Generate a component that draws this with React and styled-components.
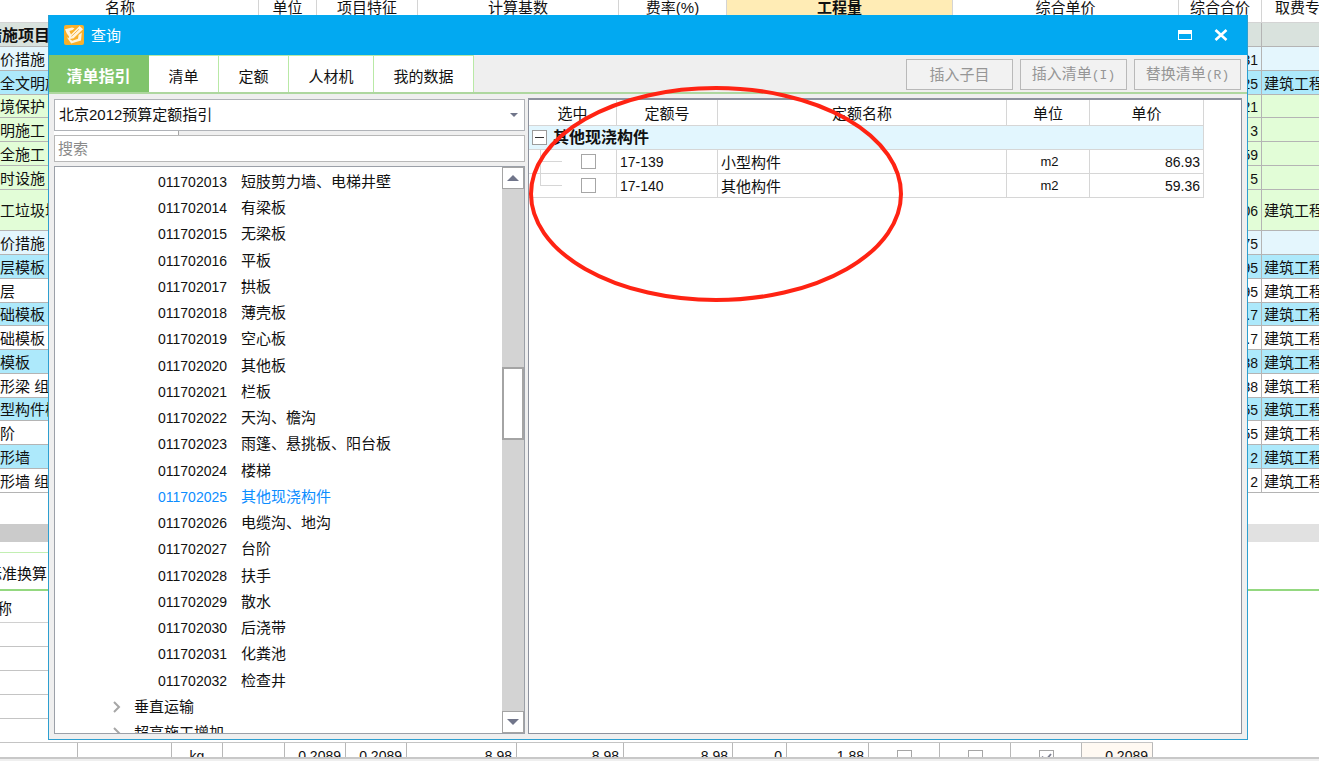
import styled, { createGlobalStyle } from 'styled-components';

const GlobalStyle = createGlobalStyle`
  * {
    box-sizing: border-box;
  }
  body {
    margin: 0;
    overflow: hidden;
    background: #fff;
    color: #111;
    font-family: 'Liberation Sans', 'Noto Sans CJK SC', sans-serif;
    font-size: 15px;
    line-height: 20px;
  }
  button,
  input,
  select {
    margin: 0;
    padding: 0;
    border-radius: 0;
    color: inherit;
    font: inherit;
  }
  table {
    border-collapse: separate;
    border-spacing: 0;
    table-layout: fixed;
  }
  th,
  td {
    padding: 0;
    overflow: hidden;
    font-weight: 400;
    white-space: nowrap;
  }
`;

const budgetRows = [
  { name: '措施项目', total: '', major: '', tone: 'total' },
  { name: '价措施', total: '31', major: '', tone: 'pale' },
  { name: '全文明施工', total: '25', major: '建筑工程', tone: 'blue' },
  { name: '境保护', total: '21', major: '', tone: 'green' },
  { name: '明施工', total: '3', major: '', tone: 'green' },
  { name: '全施工', total: '59', major: '', tone: 'green' },
  { name: '时设施', total: '5', major: '', tone: 'green' },
  { name: '工垃圾增加', total: '06', major: '建筑工程', tone: 'green', tall: true },
  { name: '价措施', total: '75', major: '', tone: 'pale' },
  { name: '层模板', total: '95', major: '建筑工程', tone: 'blue' },
  { name: '层', total: '95', major: '建筑工程' },
  { name: '础模板', total: '.7', major: '建筑工程', tone: 'blue' },
  { name: '础模板', total: '.7', major: '建筑工程' },
  { name: '模板', total: '38', major: '建筑工程', tone: 'blue' },
  { name: '形梁 组合', total: '38', major: '建筑工程' },
  { name: '型构件模板', total: '55', major: '建筑工程', tone: 'blue' },
  { name: '阶', total: '55', major: '建筑工程' },
  { name: '形墙', total: '2', major: '建筑工程', tone: 'blue' },
  { name: '形墙 组合', total: '2', major: '建筑工程' },
];

const treeItems = [
  ['011702013', '短肢剪力墙、电梯井壁'],
  ['011702014', '有梁板'],
  ['011702015', '无梁板'],
  ['011702016', '平板'],
  ['011702017', '拱板'],
  ['011702018', '薄壳板'],
  ['011702019', '空心板'],
  ['011702020', '其他板'],
  ['011702021', '栏板'],
  ['011702022', '天沟、檐沟'],
  ['011702023', '雨篷、悬挑板、阳台板'],
  ['011702024', '楼梯'],
  ['011702025', '其他现浇构件'],
  ['011702026', '电缆沟、地沟'],
  ['011702027', '台阶'],
  ['011702028', '扶手'],
  ['011702029', '散水'],
  ['011702030', '后浇带'],
  ['011702031', '化粪池'],
  ['011702032', '检查井'],
];

const quotas = [
  { code: '17-139', name: '小型构件', unit: 'm2', price: '86.93' },
  { code: '17-140', name: '其他构件', unit: 'm2', price: '59.36' },
];

const tones = {
  total: '#d9e2dd',
  pale: '#e4f6fd',
  blue: '#ade9fb',
  green: '#e2fdd7',
};

function BudgetTable() {
  return (
    <StyledBudgetTable>
      <colgroup>
        <col width="259" />
        <col width="58" />
        <col width="101" />
        <col width="201" />
        <col width="108" />
        <col width="226" />
        <col width="226" />
        <col width="83" />
        <col />
      </colgroup>
      <thead>
        <tr>
          <th className="name">名称</th>
          <th>单位</th>
          <th>项目特征</th>
          <th>计算基数</th>
          <th>费率(%)</th>
          <th className="quantity">工程量</th>
          <th>综合单价</th>
          <th>综合合价</th>
          <th className="major">取费专业</th>
        </tr>
      </thead>
      <tbody>
        {budgetRows.map((row, i) => (
          <BudgetRow key={i} $tone={row.tone} $tall={row.tall}>
            <td className="name">{row.name}</td>
            <td />
            <td />
            <td />
            <td />
            <td />
            <td />
            <td className="number">{row.total}</td>
            <td className="text">{row.major}</td>
          </BudgetRow>
        ))}
      </tbody>
    </StyledBudgetTable>
  );
}

function ResourceTable() {
  return (
    <StyledResourceTable>
      <colgroup>
        <col width="78" />
        <col width="94" />
        <col width="51" />
        <col width="62" />
        <col width="61" />
        <col width="61" />
        <col width="110" />
        <col width="107" />
        <col width="109" />
        <col width="54" />
        <col width="82" />
        <col width="71" />
        <col width="71" />
        <col width="71" />
        <col width="71" />
      </colgroup>
      <thead>
        <tr>
          <th>称</th>
          <th colSpan="14" />
        </tr>
      </thead>
      <tbody>
        {[1, 2, 3, 4, 5].map((n) => (
          <tr key={n}>
            <td colSpan="15" />
          </tr>
        ))}
        <tr className="values">
          <td />
          <td />
          <td className="center">kg</td>
          <td />
          <td>0.2089</td>
          <td>0.2089</td>
          <td>8.98</td>
          <td>8.98</td>
          <td>8.98</td>
          <td>0</td>
          <td>1.88</td>
          <td className="center">
            <CheckBox aria-label="是否暂估" />
          </td>
          <td className="center">
            <CheckBox aria-label="锁定数量" />
          </td>
          <td className="center">
            <CheckBox aria-label="是否计价" defaultChecked />
          </td>
          <td className="original">0.2089</td>
        </tr>
      </tbody>
    </StyledResourceTable>
  );
}

function CheckBox(props) {
  return (
    <StyledCheckBox>
      <input type="checkbox" {...props} />
      <svg width="11" height="9" viewBox="0 0 11 9">
        <path d="M1 3.5 4.5 7.5 10 1" fill="none" stroke="#7b7d90" strokeWidth="1.8" />
      </svg>
    </StyledCheckBox>
  );
}

function TitleBar() {
  return (
    <StyledTitleBar>
      <svg width="20" height="20" viewBox="0 0 20 20">
        <rect width="20" height="20" rx="2" fill="#f9b02a" />
        <path
          d="M1 4.2 8 2.4l2.6.8-2 1.8L5.4 6 7 9.4 15.6 1 19 4.2 9.6 13.2 4.6 14.2 5 11.6 2.8 8.6Z"
          fill="#fff4dc"
        />
        <path d="m14.6 10 3.2-2.6-.8 8.2-9.8 2.8L3 12.6l1.2.2 4 3 5.8-2Z" fill="#fff4dc" />
        <path d="m7.4 11.4 7.6-7.2" stroke="#f6b94f" strokeWidth="1" />
      </svg>
      <h1>查询</h1>
      <button type="button" aria-label="最大化">
        <svg width="14" height="10" viewBox="0 0 14 10">
          <path d="M0 0h14v10H0zM1 4v5h12V4z" fill="#fff" fillRule="evenodd" />
        </svg>
      </button>
      <button type="button" aria-label="关闭">
        <svg width="14" height="12" viewBox="0 0 14 12">
          <path d="M1.5 1 12.5 11M12.5 1 1.5 11" stroke="#fff" strokeWidth="2.6" />
        </svg>
      </button>
    </StyledTitleBar>
  );
}

function Toolbar() {
  return (
    <StyledToolbar>
      <Tab type="button" $width={100} $active>
        清单指引
      </Tab>
      <Tab type="button" $width={70}>
        清单
      </Tab>
      <Tab type="button" $width={70}>
        定额
      </Tab>
      <Tab type="button" $width={85}>
        人材机
      </Tab>
      <Tab type="button" $width={100}>
        我的数据
      </Tab>
      <div className="actions">
        <ActionButton type="button">插入子目</ActionButton>
        <ActionButton type="button">
          插入清单<span>(I)</span>
        </ActionButton>
        <ActionButton type="button">
          替换清单<span>(R)</span>
        </ActionButton>
      </div>
    </StyledToolbar>
  );
}

function Arrow({ up }) {
  return (
    <svg width="12" height="6" viewBox="0 0 12 6">
      <path d={up ? 'M6 0 12 6H0Z' : 'M0 0h12L6 6Z'} fill="#70758a" />
    </svg>
  );
}

function Chevron() {
  return (
    <svg width="8" height="12" viewBox="0 0 8 12">
      <path d="m1 1 5 5-5 5" fill="none" stroke="#a6a6a6" strokeWidth="2" />
    </svg>
  );
}

function GuidePanel() {
  return (
    <StyledGuidePanel>
      <SelectBox>
        <select aria-label="定额指引">
          <option>北京2012预算定额指引</option>
        </select>
        <svg width="8" height="4" viewBox="0 0 8 4">
          <path d="M0 0h8L4 4Z" fill="#70758a" />
        </svg>
      </SelectBox>
      <Splitter />
      <SearchInput type="text" placeholder="搜索" aria-label="搜索" />
      <TreeBox>
        <ul>
          {treeItems.map(([code, name]) => (
            <TreeItem key={code} $selected={code === '011702025'}>
              <span>{code}</span>
              {name}
            </TreeItem>
          ))}
          <TreeFolder>
            <Chevron />
            垂直运输
          </TreeFolder>
          <TreeFolder>
            <Chevron />
            超高施工增加
          </TreeFolder>
        </ul>
        <ScrollBar>
          <button type="button" aria-label="向上滚动">
            <Arrow up />
          </button>
          <div className="thumb" />
          <button type="button" aria-label="向下滚动">
            <Arrow />
          </button>
        </ScrollBar>
      </TreeBox>
    </StyledGuidePanel>
  );
}

function QuotaPanel() {
  return (
    <StyledQuotaPanel>
      <QuotaTable>
        <colgroup>
          <col width="88" />
          <col width="101" />
          <col width="289" />
          <col width="83" />
          <col width="114" />
        </colgroup>
        <thead>
          <tr>
            <th>选中</th>
            <th>定额号</th>
            <th>定额名称</th>
            <th>单位</th>
            <th>单价</th>
          </tr>
        </thead>
        <tbody>
          <tr className="group">
            <td colSpan="5">
              <div>
                <button type="button" aria-label="折叠" />
                其他现浇构件
              </div>
            </td>
          </tr>
          {quotas.map((quota, i) => (
            <tr key={quota.code}>
              <td>
                <Branch $last={i === quotas.length - 1}>
                  <i />
                  <CheckBox aria-label={quota.name} />
                </Branch>
              </td>
              <td className="code">{quota.code}</td>
              <td className="title">{quota.name}</td>
              <td className="unit">{quota.unit}</td>
              <td className="price">{quota.price}</td>
            </tr>
          ))}
        </tbody>
      </QuotaTable>
    </StyledQuotaPanel>
  );
}

export default function App() {
  return (
    <Page>
      <GlobalStyle />
      <BudgetTable />
      <HorizontalScroll>
        <div />
      </HorizontalScroll>
      <DetailTabs>
        <button type="button">标准换算</button>
      </DetailTabs>
      <DetailArea>
        <ResourceTable />
      </DetailArea>
      <StatusBar />
      <Dialog role="dialog" aria-label="查询">
        <TitleBar />
        <Toolbar />
        <DialogBody>
          <GuidePanel />
          <QuotaPanel />
        </DialogBody>
        <Marker viewBox="0 0 376 218">
          <ellipse cx="188" cy="109" rx="185" ry="106" />
        </Marker>
      </Dialog>
    </Page>
  );
}

const Page = styled.div`
  position: relative;
  display: flex;
  flex-direction: column;
  height: 100vh;
  overflow: hidden;
`;

const StyledBudgetTable = styled.table`
  width: 100%;
  th {
    height: 23px;
    overflow: visible;
    border-right: 1px solid #d4d4d4;
    border-bottom: 1px solid #d4d4d4;
    line-height: 16px;
    vertical-align: top;
  }
  th.name {
    padding-right: 18px;
  }
  th.quantity {
    background: #ffecb5;
    font-weight: 700;
  }
  th.major {
    padding-left: 13px;
    border-right: 0;
    overflow: hidden;
    text-align: left;
  }
`;

const BudgetRow = styled.tr`
  height: ${({ $tall }) => ($tall ? 41 : 24)}px;
  background: ${({ $tone }) => tones[$tone] || '#fff'};
  &:nth-child(4n) {
    height: ${({ $tall }) => ($tall ? 41 : 23)}px;
  }
  td {
    padding-top: 2px;
    border-right: 1px solid #b4b4b4;
    border-bottom: 1px solid #b4b4b4;
  }
  td:last-child {
    border-right: 0;
  }
  .name {
    font-size: ${({ $tone }) => ($tone === 'total' ? 16 : 15)}px;
    font-weight: ${({ $tone }) => ($tone === 'total' ? 700 : 400)};
    text-indent: ${({ $tone }) => ($tone === 'total' ? -14 : 0)}px;
  }
  .number {
    padding-right: 3px;
    font-size: 14px;
    text-align: right;
  }
  .text {
    padding-left: 2px;
  }
`;

const HorizontalScroll = styled.div`
  flex: none;
  height: 18px;
  margin-top: 31px;
  background: #e1e1e1;
  div {
    width: 50%;
    height: 100%;
    background: #cbcbcb;
  }
`;

const DetailTabs = styled.div`
  flex: none;
  display: flex;
  height: 49px;
  padding-top: 10px;
  border-bottom: 2px solid #94d880;
  button {
    width: 140px;
    padding-top: 5px;
    border: 0;
    border-top: 1px solid #c2efb2;
    background: #fff;
    text-align: left;
    text-indent: -13px;
  }
`;

const DetailArea = styled.div`
  flex: 1;
  min-height: 0;
  overflow: hidden;
`;

const StyledResourceTable = styled.table`
  width: 1152px;
  th {
    height: 32px;
    padding-top: 4px;
    border-bottom: 1px solid #d0d0d0;
    text-align: left;
    text-indent: -3px;
  }
  td {
    height: 24px;
    padding-right: 4px;
    border-bottom: 1px solid #c4c4c4;
    font-size: 14px;
    text-align: right;
  }
  .values td {
    height: 27px;
    border-right: 1px solid #b8b8b8;
  }
  .values .center {
    padding: 0;
    text-align: center;
  }
  .values .original {
    background: #fff9f2;
  }
`;

const StatusBar = styled.div`
  flex: none;
  height: 4px;
  border-top: 2px solid #c8c8c8;
  background: #efefef;
`;

const StyledCheckBox = styled.label`
  display: inline-grid;
  place-items: center;
  vertical-align: middle;
  input,
  svg {
    grid-area: 1 / 1;
  }
  input {
    width: 15px;
    height: 15px;
    appearance: none;
    border: 1px solid #a6a6a6;
    background: #fff;
  }
  svg {
    visibility: hidden;
  }
  input:checked + svg {
    visibility: visible;
  }
`;

const Dialog = styled.section`
  position: absolute;
  top: 15px;
  right: 71px;
  bottom: 21px;
  left: 48px;
  display: flex;
  flex-direction: column;
  border: 1px solid #2d9fd0;
  border-top: 0;
  background: #efefef;
`;

const StyledTitleBar = styled.header`
  flex: none;
  display: flex;
  align-items: center;
  height: 40px;
  padding: 0 18px 0 15px;
  background: #02a9f1;
  color: #fff;
  h1 {
    flex: 1;
    margin: 0;
    padding: 2px 0 0 7px;
    font-size: 15px;
    font-weight: 400;
  }
  button {
    display: grid;
    place-items: center;
    width: 16px;
    height: 16px;
    margin-left: 20px;
    border: 0;
    background: none;
  }
`;

const StyledToolbar = styled.nav`
  flex: none;
  display: flex;
  height: 39px;
  border-bottom: 2px solid #aed79f;
  .actions {
    display: flex;
    gap: 7px;
    margin-left: auto;
    padding: 4px 6px 2px 0;
  }
`;

const Tab = styled.button`
  width: ${({ $width }) => $width}px;
  padding-top: 5px;
  border: 0;
  border-top: 1px solid ${({ $active }) => ($active ? '#80c46c' : '#b9e9a6')};
  border-right: 1px solid ${({ $active }) => ($active ? '#80c46c' : '#b9e9a6')};
  background: ${({ $active }) => ($active ? '#80c46c' : '#fff')};
  color: ${({ $active }) => ($active ? '#fff' : '#111')};
  font-size: ${({ $active }) => ($active ? 16 : 15)}px;
  font-weight: ${({ $active }) => ($active ? 700 : 400)};
`;

const ActionButton = styled.button`
  width: 107px;
  padding-top: 1px;
  border: 1px solid #b9b9b9;
  background: #f2f2f2;
  color: #969696;
  white-space: nowrap;
  span {
    font-family: 'Liberation Mono', monospace;
    font-size: 13px;
  }
`;

const DialogBody = styled.div`
  flex: 1;
  display: grid;
  grid-template-columns: 471px 1fr;
  gap: 3px;
  min-height: 0;
  padding: 4px 5px 5px;
`;

const StyledGuidePanel = styled.div`
  display: flex;
  flex-direction: column;
  min-height: 0;
  padding-top: 1px;
`;

const SelectBox = styled.div`
  flex: none;
  display: grid;
  align-items: center;
  height: 32px;
  border: 1px solid #b0b3b8;
  background: #fff;
  select,
  svg {
    grid-area: 1 / 1;
  }
  select {
    width: 100%;
    height: 100%;
    padding-left: 4px;
    appearance: none;
    border: 0;
    background: #fff;
  }
  svg {
    justify-self: end;
    margin-right: 6px;
    pointer-events: none;
  }
`;

const Splitter = styled.div`
  flex: none;
  width: 125px;
  height: 4px;
  border-right: 1px solid #a6a6a6;
  background: #fff;
`;

const SearchInput = styled.input`
  flex: none;
  width: 100%;
  height: 27px;
  padding: 0 3px;
  border: 1px solid #b8b8b8;
  background: #fff;
  &::placeholder {
    color: #8a8a8a;
    opacity: 1;
  }
`;

const TreeBox = styled.div`
  flex: 1;
  display: flex;
  min-height: 0;
  margin-top: 4px;
  border: 1px solid #9ba0a8;
  background: #fff;
  ul {
    flex: 1;
    margin: 0;
    padding: 2px 0 0;
    overflow: hidden;
    list-style: none;
  }
  li {
    display: flex;
    align-items: center;
    height: 26px;
  }
  li:nth-child(4n) {
    height: 27px;
  }
`;

const TreeItem = styled.li`
  padding-left: 103px;
  color: ${({ $selected }) => ($selected ? '#0d8dff' : '#111')};
  span {
    width: 83px;
    font-size: 14px;
  }
`;

const TreeFolder = styled.li`
  gap: 13px;
  padding-left: 58px;
`;

const ScrollBar = styled.div`
  display: flex;
  flex-direction: column;
  width: 22px;
  background: #d3d3d3;
  button {
    flex: none;
    display: grid;
    place-items: center;
    height: 22px;
    border: 1px solid #a4a4a4;
    background: #fff;
  }
  .thumb {
    height: 73px;
    margin: 178px 0 auto;
    border: 2px solid #a4a4a4;
    background: #fff;
  }
`;

const StyledQuotaPanel = styled.div`
  min-width: 0;
  overflow: hidden;
  border: 1px solid #8d929e;
  border-width: 2px 1px 1px;
  background: #fff;
`;

const QuotaTable = styled.table`
  width: 675px;
  th {
    height: 26px;
    padding-top: 2px;
    text-align: center;
  }
  th,
  td {
    border-right: 1px solid #d6d6d6;
    border-bottom: 1px solid #d6d6d6;
  }
  td {
    height: 24px;
  }
  td + td {
    padding-left: 3px;
  }
  .group td {
    background: #e2f6fe;
    font-size: 16px;
    font-weight: 700;
    line-height: 23px;
  }
  .group div {
    display: flex;
    align-items: center;
    gap: 6px;
    padding-left: 3px;
  }
  .group button {
    width: 15px;
    height: 15px;
    border: 1px solid #9c9c9c;
    background: linear-gradient(#333, #333) center / 9px 1px no-repeat #fff;
  }
  .title {
    padding-top: 2px;
  }
  .code,
  .unit,
  .price {
    padding-top: 1px;
    font-size: 14px;
  }
  .unit {
    font-size: 13px;
    text-align: center;
  }
  .price {
    padding-right: 3px;
    text-align: right;
  }
`;

const Branch = styled.div`
  display: flex;
  height: 23px;
  padding-left: 11px;
  i {
    width: 22px;
    height: ${({ $last }) => ($last ? '12px' : '100%')};
    margin-right: 19px;
    border-left: 1px solid #d6d6d6;
    background: linear-gradient(#d6d6d6, #d6d6d6) 0 11px / 100% 1px no-repeat;
  }
`;

const Marker = styled.svg`
  position: absolute;
  top: 70px;
  left: 479px;
  width: 376px;
  height: 218px;
  pointer-events: none;
  ellipse {
    fill: none;
    stroke: #ff2313;
    stroke-width: 4;
  }
`;
